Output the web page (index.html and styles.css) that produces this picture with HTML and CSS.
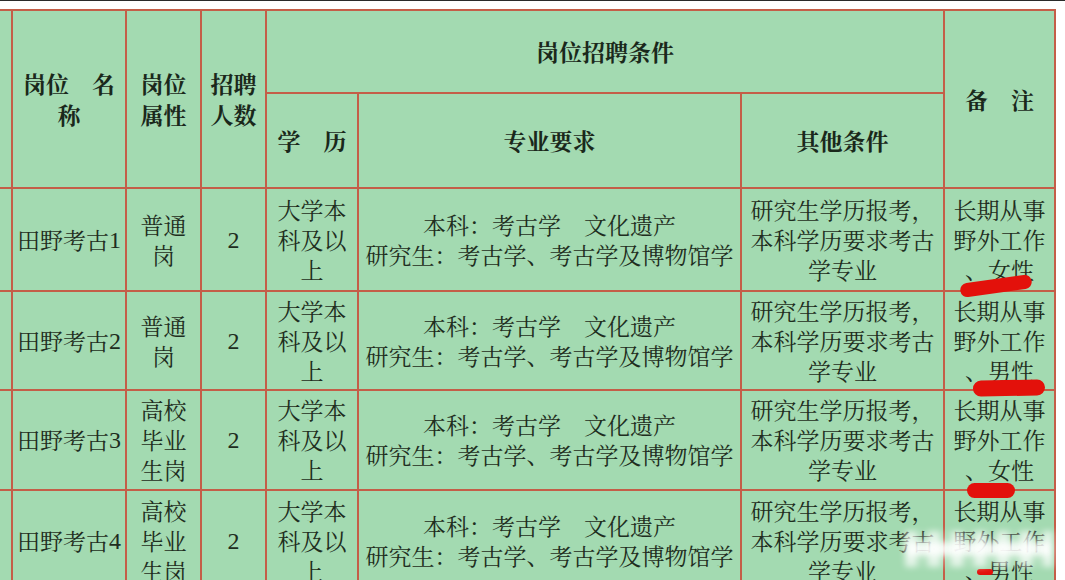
FILE: index.html
```html
<!DOCTYPE html>
<html lang="zh-CN">
<head>
<meta charset="utf-8">
<title>岗位招聘条件</title>
<link rel="stylesheet" href="styles.css">
</head>
<body>
<div class="page">
  <div class="topline"></div>
  <div class="sheet">
    <div class="grid">
      <div class="c edge span-r2"></div>
      <div class="c hd span-r2">岗位　名<br>称</div>
      <div class="c hd span-r2">岗位<br>属性</div>
      <div class="c hd span-r2">招聘<br>人数</div>
      <div class="c hd span-c3">岗位招聘条件</div>
      <div class="c hd span-r2">备　注</div>
      <div class="c hd">学　历</div>
      <div class="c hd">专业要求</div>
      <div class="c hd">其他条件</div>

      <div class="c edge"></div>
      <div class="c">田野考古<span class="num">1</span></div>
      <div class="c">普通<br>岗</div>
      <div class="c"><span class="num">2</span></div>
      <div class="c">大学本<br>科及以<br>上</div>
      <div class="c">本科：考古学　文化遗产<br>研究生：考古学、考古学及博物馆学</div>
      <div class="c">研究生学历报考，<br>本科学历要求考古<br>学专业</div>
      <div class="c note">长期从事<br>野外工作<br>、女性<span class="mark m1"></span></div>

      <div class="c edge"></div>
      <div class="c">田野考古<span class="num">2</span></div>
      <div class="c">普通<br>岗</div>
      <div class="c"><span class="num">2</span></div>
      <div class="c">大学本<br>科及以<br>上</div>
      <div class="c">本科：考古学　文化遗产<br>研究生：考古学、考古学及博物馆学</div>
      <div class="c">研究生学历报考，<br>本科学历要求考古<br>学专业</div>
      <div class="c note">长期从事<br>野外工作<br>、男性<span class="mark m2"></span></div>

      <div class="c edge"></div>
      <div class="c">田野考古<span class="num">3</span></div>
      <div class="c">高校<br>毕业<br>生岗</div>
      <div class="c"><span class="num">2</span></div>
      <div class="c">大学本<br>科及以<br>上</div>
      <div class="c">本科：考古学　文化遗产<br>研究生：考古学、考古学及博物馆学</div>
      <div class="c">研究生学历报考，<br>本科学历要求考古<br>学专业</div>
      <div class="c note">长期从事<br>野外工作<br>、女性<span class="mark m3"></span></div>

      <div class="c edge"></div>
      <div class="c">田野考古<span class="num">4</span></div>
      <div class="c">高校<br>毕业<br>生岗</div>
      <div class="c"><span class="num">2</span></div>
      <div class="c">大学本<br>科及以<br>上</div>
      <div class="c">本科：考古学　文化遗产<br>研究生：考古学、考古学及博物馆学</div>
      <div class="c">研究生学历报考，<br>本科学历要求考古<br>学专业</div>
      <div class="c note">长期从事<br>野外工作<br>、男性<span class="mark m4"></span><span class="blur"></span></div>
    </div>
  </div>
</div>
</body>
</html>
```

FILE: styles.css
```css
html, body {
  margin: 0;
  padding: 0;
  background: #ffffff;
}

body {
  width: 1065px;
  height: 580px;
  overflow: hidden;
}

.page {
  width: 1065px;
  height: 580px;
  overflow: hidden;
}

.topline {
  height: 1px;
  background: #2a2a2a;
}

.sheet {
  margin-top: 8px;
  width: 1056px;
}

.grid {
  display: grid;
  grid-template-columns: 11px 112px 73px 63px 90px 381px 201px 109px;
  grid-template-rows: 81px 93px 101px 97px 98px 99px;
  gap: 2px;
  padding: 2px 2px 0 0;
  background: #c45e48;
  font-family: "Noto Serif CJK SC", "Noto Sans CJK SC", serif;
  font-size: 23px;
  line-height: 30px;
  color: #1e2d20;
}

.c {
  background: #a3dab1;
  display: flex;
  align-items: center;
  justify-content: center;
  text-align: center;
  white-space: nowrap;
}

.hd {
  font-weight: 700;
  line-height: 31px;
  color: #1a281b;
}

.span-r2 {
  grid-row: span 2;
}

.span-c3 {
  grid-column: span 3;
}

.num {
  font-family: "Liberation Serif", serif;
  font-size: 24px;
}

.note {
  position: relative;
}

.mark {
  position: absolute;
  z-index: 2;
  background: #e3110b;
  border-radius: 9px;
}

.m1 {
  left: 15px;
  top: 90px;
  width: 72px;
  height: 14px;
  transform: rotate(-8deg);
}

.m2 {
  left: 28px;
  top: 88px;
  width: 72px;
  height: 16px;
  transform: rotate(-1deg);
}

.m3 {
  left: 22px;
  top: 92px;
  width: 48px;
  height: 15px;
}

.m4 {
  left: 32px;
  top: 78px;
  width: 16px;
  height: 6px;
  border-radius: 3px;
}

.blur {
  position: absolute;
  z-index: 3;
  left: -40px;
  top: 40px;
  width: 148px;
  height: 36px;
  background:
    linear-gradient(to bottom, rgba(255,255,255,0) 0 30%, rgba(255,255,255,0.85) 30% 70%, rgba(255,255,255,0) 70%),
    repeating-linear-gradient(90deg, rgba(255,255,255,0.7) 0 12px, rgba(255,255,255,0.15) 12px 23px);
  filter: blur(3px);
}
```
